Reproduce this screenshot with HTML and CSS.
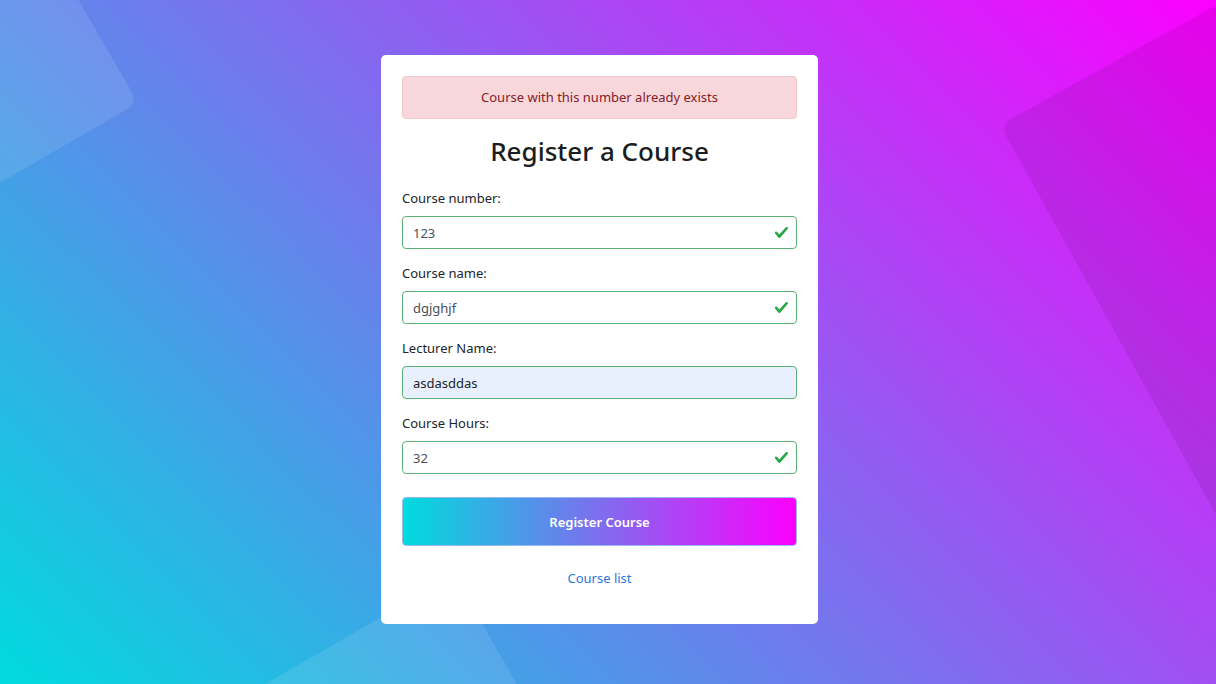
FILE: index.html
```html
<!DOCTYPE html>
<html lang="en">
<head>
<meta charset="utf-8">
<title>Register a Course</title>
<link rel="stylesheet" href="styles.css">
</head>
<body>
<svg class="bg-shapes" width="1216" height="684" viewBox="0 0 1216 684" aria-hidden="true">
  <rect x="0" y="0" width="420" height="420" rx="12" fill="#ffffff" fill-opacity="0.1" transform="translate(138,103) rotate(150)"/>
  <rect x="0" y="0" width="700" height="700" rx="12" fill="#000000" fill-opacity="0.08" transform="translate(1000,125) rotate(-29)"/>
  <rect x="0" y="0" width="420" height="420" rx="12" fill="#ffffff" fill-opacity="0.1" transform="translate(454,575) rotate(60)"/>
</svg>
<main class="page">
  <section class="card">
    <div class="alert">Course with this number already exists</div>
    <h2 class="title">Register a Course</h2>
    <form class="form">
      <div class="group">
        <label class="label" for="num">Course number:</label>
        <div class="field valid"><input id="num" class="input" value="123"><svg class="check" viewBox="0 0 8 8"><path fill="#28a745" d="M2.3 6.73.6 4.53c-.4-1.04.46-1.4 1.1-.8l1.1 1.4 3.4-3.8c.6-.63 1.6-.27 1.2.7l-4 4.6c-.43.5-.8.4-1.1.1z"/></svg></div>
      </div>
      <div class="group">
        <label class="label" for="name">Course name:</label>
        <div class="field valid"><input id="name" class="input" value="dgjghjf"><svg class="check" viewBox="0 0 8 8"><path fill="#28a745" d="M2.3 6.73.6 4.53c-.4-1.04.46-1.4 1.1-.8l1.1 1.4 3.4-3.8c.6-.63 1.6-.27 1.2.7l-4 4.6c-.43.5-.8.4-1.1.1z"/></svg></div>
      </div>
      <div class="group">
        <label class="label" for="lect">Lecturer Name:</label>
        <div class="field"><input id="lect" class="input autofill" value="asdasddas"></div>
      </div>
      <div class="group">
        <label class="label" for="hours">Course Hours:</label>
        <div class="field valid"><input id="hours" class="input" value="32"><svg class="check" viewBox="0 0 8 8"><path fill="#28a745" d="M2.3 6.73.6 4.53c-.4-1.04.46-1.4 1.1-.8l1.1 1.4 3.4-3.8c.6-.63 1.6-.27 1.2.7l-4 4.6c-.43.5-.8.4-1.1.1z"/></svg></div>
      </div>
      <button type="button" class="btn">Register Course</button>
    </form>
    <div class="links"><a class="link" href="#">Course list</a></div>
  </section>
</main>
</body>
</html>
```
FILE: styles.css
```css
* { box-sizing: border-box; }
html, body { margin: 0; padding: 0; }
body {
  width: 1216px;
  height: 684px;
  overflow: hidden;
  font-family: "Noto Sans", "Open Sans", sans-serif;
  font-size: 13px;
  line-height: 21px;
  color: #212529;
  background: linear-gradient(45deg, #00dbde 0%, #fc00ff 100%);
  position: relative;
}
.bg-shapes {
  position: absolute;
  left: 0;
  top: 0;
}
.page {
  position: relative;
  display: flex;
  justify-content: center;
  padding: 55px 17px 0 0;
}
.card {
  width: 437px;
  background: #fff;
  border-radius: 5px;
  padding: 21px 21px 35px;
}
.alert {
  background: #f8d7da;
  border: 1px solid #f5c6cb;
  color: #842029;
  border-radius: 4px;
  padding: 10px 12px;
  text-align: center;
}
.title {
  margin: 15px 0 20px;
  font-size: 26px;
  line-height: 34px;
  font-weight: 500;
  text-align: center;
  color: #1b1e21;
}
.form { display: flex; flex-direction: column; }
.group { margin-bottom: 14px; }
.label {
  display: block;
  margin-bottom: 7px;
  color: #212529;
}
.field { position: relative; }
.input {
  display: block;
  width: 100%;
  height: 33px;
  padding: 0 34px 0 10px;
  font-family: inherit;
  font-size: 13px;
  color: #495057;
  background: #fff;
  border: 1px solid #5cb176;
  border-radius: 4px;
  outline: none;
}
.input.autofill {
  background: #e8f0fe;
  color: #212529;
}
.check {
  position: absolute;
  right: 8px;
  top: 9px;
  width: 15px;
  height: 15px;
}
.btn {
  margin-top: 9px;
  height: 49px;
  border: 1px solid #9ab8f0;
  border-radius: 4px;
  background: linear-gradient(90deg, #00dbde 0%, #fc00ff 100%);
  color: #fff;
  font-family: inherit;
  font-size: 13px;
  font-weight: 600;
}
.links {
  margin-top: 22px;
  text-align: center;
}
.link {
  color: #2a76e0;
  text-decoration: none;
}
```
